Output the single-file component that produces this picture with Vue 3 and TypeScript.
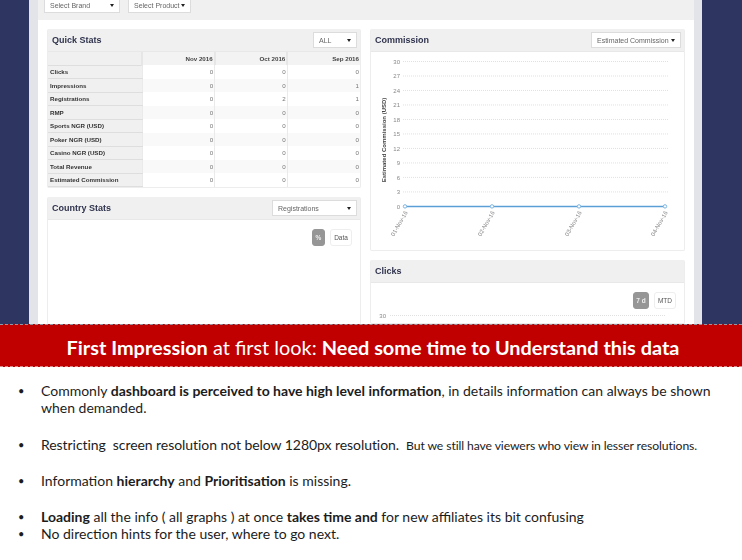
<script setup lang="ts">
interface StatRow {
  label: string
  values: number[]
}

const months = ['Nov 2016', 'Oct 2016', 'Sep 2016']

const rows: StatRow[] = [
  {label: 'Clicks', values: [0, 0, 0]},
  {label: 'Impressions', values: [0, 0, 1]},
  {label: 'Registrations', values: [0, 2, 1]},
  {label: 'RMP', values: [0, 0, 0]},
  {label: 'Sports NGR (USD)', values: [0, 0, 0]},
  {label: 'Poker NGR (USD)', values: [0, 0, 0]},
  {label: 'Casino NGR (USD)', values: [0, 0, 0]},
  {label: 'Total Revenue', values: [0, 0, 0]},
  {label: 'Estimated Commission', values: [0, 0, 0]},
]

const ticks = [30, 27, 24, 21, 18, 15, 12, 9, 6, 3, 0]
const tickY = (t: number) => 9.5 + (30 - t) * 4.83

const points = [
  {x: 34, date: '01-Nov-16'},
  {x: 121, date: '02-Nov-16'},
  {x: 208, date: '03-Nov-16'},
  {x: 294, date: '04-Nov-16'},
]
</script>

<template>
  <div class="slide">
    <div class="screen">
      <div class="dashboard">
        <div class="filters">
          <div class="select brand"><span>Select Brand</span><i class="arrow"></i></div>
          <div class="select product"><span>Select Product</span><i class="arrow"></i></div>
        </div>

        <div class="columns">
          <div class="col">
            <section class="panel">
              <header class="panel-head">
                <h3>Quick Stats</h3>
                <div class="select all"><span>ALL</span><i class="arrow"></i></div>
              </header>
              <table class="stats">
                <thead>
                  <tr>
                    <th class="label"></th>
                    <th v-for="m in months" :key="m">{{ m }}</th>
                  </tr>
                </thead>
                <tbody>
                  <tr v-for="r in rows" :key="r.label">
                    <th class="label">{{ r.label }}</th>
                    <td v-for="(v, i) in r.values" :key="i">{{ v }}</td>
                  </tr>
                </tbody>
              </table>
            </section>

            <section class="panel country">
              <header class="panel-head">
                <h3>Country Stats</h3>
                <div class="select registrations"><span>Registrations</span><i class="arrow"></i></div>
              </header>
              <div class="toggles">
                <span class="toggle on">%</span>
                <span class="toggle wide">Data</span>
              </div>
            </section>
          </div>

          <div class="col">
            <section class="panel commission">
              <header class="panel-head">
                <h3>Commission</h3>
                <div class="select estimated"><span>Estimated Commission</span><i class="arrow"></i></div>
              </header>
              <svg class="chart" width="314" height="198" viewBox="0 0 314 198">
                <text class="axis-title" transform="translate(15 88) rotate(-90)" text-anchor="middle">Estimated Commission (USD)</text>
                <g v-for="t in ticks" :key="t">
                  <text class="tick" x="29" :y="tickY(t) + 2.5" text-anchor="end">{{ t }}</text>
                  <line v-if="t > 0" class="grid" x1="32" x2="298" :y1="tickY(t)" :y2="tickY(t)" />
                </g>
                <line class="series" x1="34" x2="294" :y1="tickY(0)" :y2="tickY(0)" />
                <g v-for="p in points" :key="p.date">
                  <circle class="dot" :cx="p.x" :cy="tickY(0)" r="1.7" />
                  <text class="tick" text-anchor="end" :transform="`translate(${p.x + 3} ${tickY(0) + 6}) rotate(-60)`">{{ p.date }}</text>
                </g>
              </svg>
            </section>

            <section class="panel clicks">
              <header class="panel-head">
                <h3>Clicks</h3>
              </header>
              <div class="toggles">
                <span class="toggle on seven">7 d</span>
                <span class="toggle wide">MTD</span>
              </div>
              <svg class="chart" width="314" height="14" viewBox="0 0 314 14">
                <text class="tick" x="15" y="8.5" text-anchor="end">30</text>
                <line class="grid" x1="19" x2="295" y1="6.5" y2="6.5" />
              </svg>
            </section>
          </div>
        </div>
      </div>
    </div>

    <div class="banner">
      <p><b>First Impression</b> at first look: <b>Need some time to Understand this data</b></p>
    </div>

    <ul class="notes">
      <li class="first">Commonly <b>dashboard is perceived to have high level information</b>, in details information can always be shown when demanded.</li>
      <li class="second">Restricting&nbsp; screen resolution not below 1280px resolution.&nbsp; <span class="small">But we still have viewers who view in lesser resolutions.</span></li>
      <li class="third">Information <b>hierarchy</b> and <b>Prioritisation</b> is missing.</li>
      <li class="fourth"><b>Loading</b> all the info ( all graphs ) at once <b>takes time and</b> for new affiliates its bit confusing</li>
      <li>No direction hints for the user, where to go next.</li>
    </ul>
  </div>
</template>

<style scoped>
.slide {
  width: 742px;
  height: 560px;
  overflow: hidden;
  background: #fff;
  font-family: 'Liberation Sans', Arial, sans-serif;
}

.screen {
  height: 324px;
  box-sizing: border-box;
  padding: 0 40px 0 29px;
  background: #2f3561;
  overflow: hidden;
}

.dashboard {
  height: 325px;
  box-sizing: border-box;
  padding: 0 8px 0 9px;
  background: #e3e3ea;
  filter: blur(0.45px);
}

.filters {
  height: 20px;
  box-sizing: border-box;
  padding-left: 6px;
  padding-bottom: 7px;
  display: flex;
  align-items: flex-end;
  gap: 8px;
  background: #f0f0f0;
}

.columns {
  height: 305px;
  box-sizing: border-box;
  padding: 9px 9px 0;
  background: #fff;
  display: grid;
  grid-template-columns: 314px 315px;
  gap: 9px;
}

.col {
  display: flex;
  flex-direction: column;
  gap: 9px;
  min-width: 0;
}

.panel {
  border: 1px solid #ededed;
  border-top: 0;
  border-radius: 2px;
  background: #fff;
}

.panel-head {
  height: 23px;
  box-sizing: border-box;
  padding: 0 3px 0 4px;
  display: flex;
  align-items: center;
  justify-content: space-between;
  background: #f0f0f0;
  border-bottom: 1px solid #e8e8e8;
}

.panel-head h3 {
  margin: 0;
  font-size: 9px;
  font-weight: 700;
  color: #30344e;
}

.select {
  height: 16px;
  box-sizing: border-box;
  padding: 0 5px;
  display: flex;
  align-items: center;
  justify-content: space-between;
  background: #fff;
  border: 1px solid #dcdcdc;
  font-size: 7px;
  color: #666;
}

.brand { width: 76px; }
.product { width: 63px; }
.all { width: 44px; }
.registrations { width: 85px; }
.estimated { width: 90px; }

.arrow {
  width: 0;
  height: 0;
  border-left: 2px solid transparent;
  border-right: 2px solid transparent;
  border-top: 3.5px solid #222;
}

.stats {
  width: 100%;
  border-collapse: collapse;
  table-layout: fixed;
  font-size: 6.2px;
}

.stats th,
.stats td {
  height: 13.5px;
  box-sizing: border-box;
  padding: 0 1px 0 2px;
  text-align: right;
  color: #777;
  font-weight: 400;
  border-left: 1px solid #eaeaea;
}

.stats thead th {
  height: 13px;
  background: #f3f3f3;
  color: #444;
  font-weight: 700;
  border-left: 2px solid #e6e6e6;
}

.stats .label {
  width: 94px;
  text-align: left;
  font-weight: 700;
  color: #333;
  background: #f0f0f0;
  border-left: 0;
  border-bottom: 1px solid #dedede;
}

.stats tbody tr:nth-child(even) td {
  background: #f9f9f9;
}

.country {
  height: 128px;
  box-sizing: border-box;
}

.toggles {
  display: flex;
  justify-content: flex-end;
  gap: 5px;
  padding: 9px 8px 0 0;
}

.toggle {
  height: 17px;
  box-sizing: border-box;
  display: flex;
  align-items: center;
  justify-content: center;
  background: #fff;
  border: 1px solid #eee;
  border-radius: 3px;
  font-size: 6.5px;
  color: #555;
}

.toggle.on {
  width: 13px;
  background: #969696;
  border-color: #969696;
  color: #eee;
  font-weight: 700;
}

.toggle.seven { width: 16px; }
.toggle.wide { width: 22px; }

.commission {
  height: 222px;
  box-sizing: border-box;
}

.chart {
  display: block;
}

.axis-title {
  font-size: 6px;
  font-weight: 700;
  fill: #444;
}

.tick {
  font-size: 6px;
  fill: #888;
}

.grid {
  stroke: #d9d9d9;
  stroke-width: 0.8;
  stroke-dasharray: 1 1;
}

.series {
  stroke: #5b9fd6;
  stroke-width: 1.5;
}

.dot {
  fill: #fff;
  stroke: #7db4e0;
  stroke-width: 1;
}

.banner {
  height: 43px;
  box-sizing: border-box;
  padding: 2px 0 0 4px;
  display: flex;
  align-items: center;
  justify-content: center;
  background: #c00000;
  border-top: 1px dashed #8b9aa6;
  border-bottom: 1px dashed #d98a8a;
  color: #fff;
  font-family: Lato, 'Open Sans', sans-serif;
  font-size: 19.9px;
}

.banner p {
  margin: 0;
}

.notes {
  margin: 0;
  padding: 15px 30px 0 18px;
  list-style: none;
  font-family: Lato, 'Open Sans', sans-serif;
  font-size: 14px;
  line-height: 17px;
  color: #1c1c1c;
}

.notes li {
  padding-left: 23px;
}

.notes li::before {
  content: '•';
  display: inline-block;
  vertical-align: top;
  width: 23px;
  margin-left: -23px;
  font-size: 11px;
}

.first { margin-bottom: 20px; }
.second { margin-bottom: 18px; white-space: nowrap; letter-spacing: -0.06px; }
.third { margin-bottom: 19px; }

.small {
  font-size: 12.2px;
  letter-spacing: -0.1px;
}
</style>
